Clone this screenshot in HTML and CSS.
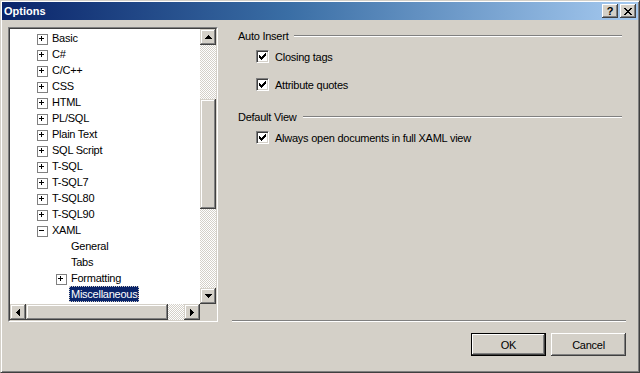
FILE: index.html
```html
<!DOCTYPE html>
<html lang="en">
<head>
    <meta charset="UTF-8">
    <title>Options</title>
    <link rel="stylesheet" href="styles.css">
</head>
<body>
    <div class="window">
        <div class="titlebar">
            <span class="title">Options</span>
            <div class="caption-buttons">
                <span class="cap-btn">?</span>
                <span class="cap-btn">
                    <svg width="8" height="7" viewBox="0 0 8 7"><path d="M0 0h2v1h-2zM6 0h2v1h-2zM1 1h2v1h-2zM5 1h2v1h-2zM2 2h4v1h-4zM3 3h2v1h-2zM2 4h4v1h-4zM1 5h2v1h-2zM5 5h2v1h-2zM0 6h2v1h-2zM6 6h2v1h-2z" fill="#000"/></svg>
                </span>
            </div>
        </div>

        <div class="client">
            <div class="tree-frame">
                <div class="tree-inner">
                    <ul class="tree">
                        <li class="node"><span class="exp plus"></span>Basic</li>
                        <li class="node"><span class="exp plus"></span>C#</li>
                        <li class="node"><span class="exp plus"></span>C/C++</li>
                        <li class="node"><span class="exp plus"></span>CSS</li>
                        <li class="node"><span class="exp plus"></span>HTML</li>
                        <li class="node"><span class="exp plus"></span>PL/SQL</li>
                        <li class="node"><span class="exp plus"></span>Plain Text</li>
                        <li class="node"><span class="exp plus"></span>SQL Script</li>
                        <li class="node"><span class="exp plus"></span>T-SQL</li>
                        <li class="node"><span class="exp plus"></span>T-SQL7</li>
                        <li class="node"><span class="exp plus"></span>T-SQL80</li>
                        <li class="node"><span class="exp plus"></span>T-SQL90</li>
                        <li class="node"><span class="exp minus"></span>XAML</li>
                        <li class="node child"><span class="exp"></span>General</li>
                        <li class="node child"><span class="exp"></span>Tabs</li>
                        <li class="node child"><span class="exp plus"></span>Formatting</li>
                        <li class="node child"><span class="exp"></span><span class="selected">Miscellaneous</span></li>
                    </ul>

                    <div class="vscroll">
                        <span class="sb-btn">
                            <svg width="7" height="4" viewBox="0 0 7 4"><path d="M3 0h1v1h1v1h1v1h1v1h-7v-1h1v-1h1v-1h1z" fill="#000"/></svg>
                        </span>
                        <span class="track v-before"></span>
                        <span class="thumb v-thumb"></span>
                        <span class="track v-after"></span>
                        <span class="sb-btn">
                            <svg width="7" height="4" viewBox="0 0 7 4"><path d="M0 0h7v1h-1v1h-1v1h-1v1h-1v-1h-1v-1h-1v-1h-1z" fill="#000"/></svg>
                        </span>
                    </div>

                    <div class="hscroll">
                        <span class="sb-btn">
                            <svg width="4" height="7" viewBox="0 0 4 7"><path d="M3 0h1v7h-1v-1h-1v-1h-1v-1h-1v-1h1v-1h1v-1h1z" fill="#000"/></svg>
                        </span>
                        <span class="thumb h-thumb"></span>
                        <span class="track h-after"></span>
                        <span class="sb-btn">
                            <svg width="4" height="7" viewBox="0 0 4 7"><path d="M0 0h1v1h1v1h1v1h1v1h-1v1h-1v1h-1v1h-1z" fill="#000"/></svg>
                        </span>
                    </div>

                    <div class="corner"></div>
                </div>
            </div>

            <div class="page">
                <div class="settings">
                    <div class="group-title"><span>Auto Insert</span><i class="rule"></i></div>
                    <label class="check first">
                        <span class="box"><svg width="7" height="7" viewBox="0 0 7 7"><path d="M0 2h1v3h-1zM1 3h1v3h-1zM2 4h1v3h-1zM3 3h1v3h-1zM4 2h1v3h-1zM5 1h1v3h-1zM6 0h1v3h-1z" fill="#000"/></svg></span>
                        Closing tags
                    </label>
                    <label class="check second">
                        <span class="box"><svg width="7" height="7" viewBox="0 0 7 7"><path d="M0 2h1v3h-1zM1 3h1v3h-1zM2 4h1v3h-1zM3 3h1v3h-1zM4 2h1v3h-1zM5 1h1v3h-1zM6 0h1v3h-1z" fill="#000"/></svg></span>
                        Attribute quotes
                    </label>

                    <div class="group-title lower"><span>Default View</span><i class="rule"></i></div>
                    <label class="check third">
                        <span class="box"><svg width="7" height="7" viewBox="0 0 7 7"><path d="M0 2h1v3h-1zM1 3h1v3h-1zM2 4h1v3h-1zM3 3h1v3h-1zM4 2h1v3h-1zM5 1h1v3h-1zM6 0h1v3h-1z" fill="#000"/></svg></span>
                        Always open documents in full XAML view
                    </label>
                </div>

                <div class="separator"></div>

                <div class="buttons">
                    <button class="btn default" type="button"><span>OK</span></button>
                    <button class="btn" type="button"><span>Cancel</span></button>
                </div>
            </div>
        </div>
    </div>
</body>
</html>
```

FILE: styles.css
```css
* {
    box-sizing: border-box;
}

body {
    margin: 0;
    width: 640px;
    height: 373px;
    overflow: hidden;
    font-family: "Liberation Sans", Arial, sans-serif;
    font-size: 11px;
    letter-spacing: -0.25px;
    color: #000;
    background: #d4d0c8;
}

.window {
    width: 640px;
    height: 373px;
    background: #d4d0c8;
    border: 1px solid;
    border-color: #d4d0c8 #404040 #404040 #d4d0c8;
    box-shadow: inset 1px 1px #fff, inset -1px -1px #808080;
    padding: 1px 1px 0 1px;
}

/* title bar */
.titlebar {
    height: 18px;
    display: flex;
    align-items: center;
    justify-content: space-between;
    background: linear-gradient(to right, #0a246a 0%, #3a6ea5 45%, #a6caf0 100%);
    padding: 0 2px;
}

.title {
    color: #fff;
    font-weight: bold;
    font-size: 11px;
    letter-spacing: 0;
}

.caption-buttons {
    display: flex;
    gap: 2px;
}

.cap-btn {
    width: 16px;
    height: 14px;
    display: flex;
    align-items: center;
    justify-content: center;
    background: #d4d0c8;
    font-weight: bold;
    font-size: 11px;
    line-height: 1;
    box-shadow: inset -1px -1px #404040, inset 1px 1px #fff, inset -2px -2px #808080;
}

/* client area */
.client {
    display: flex;
    align-items: flex-start;
    padding: 7px 0 0 6px;
}

.tree-frame {
    width: 210px;
    height: 295px;
    border: 1px solid;
    border-color: #808080 #fff #fff #808080;
}

.tree-inner {
    height: 100%;
    border: 1px solid;
    border-color: #404040 #d4d0c8 #d4d0c8 #404040;
    background: #fff;
    display: grid;
    grid-template-columns: 1fr 16px;
    grid-template-rows: 1fr 16px;
}

.tree {
    list-style: none;
    margin: 0;
    padding: 1px 0 0 0;
    overflow: hidden;
}

.node {
    height: 16px;
    display: flex;
    align-items: center;
    padding-left: 26px;
    white-space: nowrap;
}

.node.child {
    padding-left: 45px;
}

.exp {
    width: 16px;
    height: 9px;
    flex: none;
    position: relative;
}

.exp.plus::before,
.exp.minus::before {
    content: "";
    position: absolute;
    left: 1px;
    top: 0;
    width: 9px;
    height: 9px;
    border: 1px solid #808080;
    background: #fff;
}

.exp.plus::after,
.exp.minus::after {
    content: "";
    position: absolute;
    left: 3px;
    top: 2px;
    width: 5px;
    height: 5px;
    background: linear-gradient(#000, #000) 0 2px / 5px 1px no-repeat;
}

.exp.plus::after {
    background:
        linear-gradient(#000, #000) 0 2px / 5px 1px no-repeat,
        linear-gradient(#000, #000) 2px 0 / 1px 5px no-repeat;
}

.selected {
    background: #0a246a;
    color: #fff;
    margin-left: -2px;
    padding: 1px 1px;
    border: 1px dotted #d4d0c8;
}

/* scrollbars */
.vscroll {
    display: flex;
    flex-direction: column;
}

.hscroll {
    display: flex;
}

.sb-btn,
.thumb {
    background: #d4d0c8;
    box-shadow: inset -1px -1px #404040, inset 1px 1px #d4d0c8, inset -2px -2px #808080, inset 2px 2px #fff;
}

.sb-btn {
    width: 16px;
    height: 16px;
    flex: none;
    display: flex;
    align-items: center;
    justify-content: center;
}

.track {
    background: repeating-conic-gradient(#d4d0c8 0 25%, #fff 0 50%) 0 0 / 2px 2px;
}

.v-before {
    height: 54px;
}

.v-thumb {
    height: 110px;
}

.v-after {
    flex: 1;
}

.h-thumb {
    flex: 1;
}

.h-after {
    width: 16px;
}

.corner {
    background: #d4d0c8;
}

/* right page */
.page {
    width: 394px;
    height: 329px;
    margin-left: 14px;
    display: flex;
    flex-direction: column;
}

.settings {
    flex: 1;
    padding: 2px 4px 0 6px;
}

.group-title {
    display: flex;
    align-items: center;
    height: 13px;
}

.group-title span {
    margin-right: 6px;
}

.rule {
    flex: 1;
    height: 2px;
    border-top: 1px solid #808080;
    border-bottom: 1px solid #fff;
}

.group-title.lower {
    margin-top: 19px;
}

.check {
    display: flex;
    align-items: center;
    height: 13px;
    margin-left: 18px;
}

.check.first {
    margin-top: 8px;
}

.check.second {
    margin-top: 15px;
}

.check.third {
    margin-top: 8px;
}

.box {
    width: 13px;
    height: 13px;
    margin-right: 6px;
    background: #fff;
    border: 1px solid;
    border-color: #808080 #fff #fff #808080;
    box-shadow: inset 1px 1px #404040, inset -1px -1px #d4d0c8;
    display: flex;
    align-items: center;
    justify-content: center;
}

.separator {
    height: 2px;
    border-top: 1px solid #808080;
    border-bottom: 1px solid #fff;
}

.buttons {
    display: flex;
    justify-content: flex-end;
    gap: 5px;
    padding-top: 11px;
}

.btn {
    width: 75px;
    height: 23px;
    font-family: inherit;
    font-size: 11px;
    letter-spacing: inherit;
    color: #000;
    background: #d4d0c8;
    border: none;
    padding: 0;
    box-shadow: inset -1px -1px #404040, inset 1px 1px #fff, inset -2px -2px #808080;
}

.btn.default {
    border: 1px solid #000;
}
```
